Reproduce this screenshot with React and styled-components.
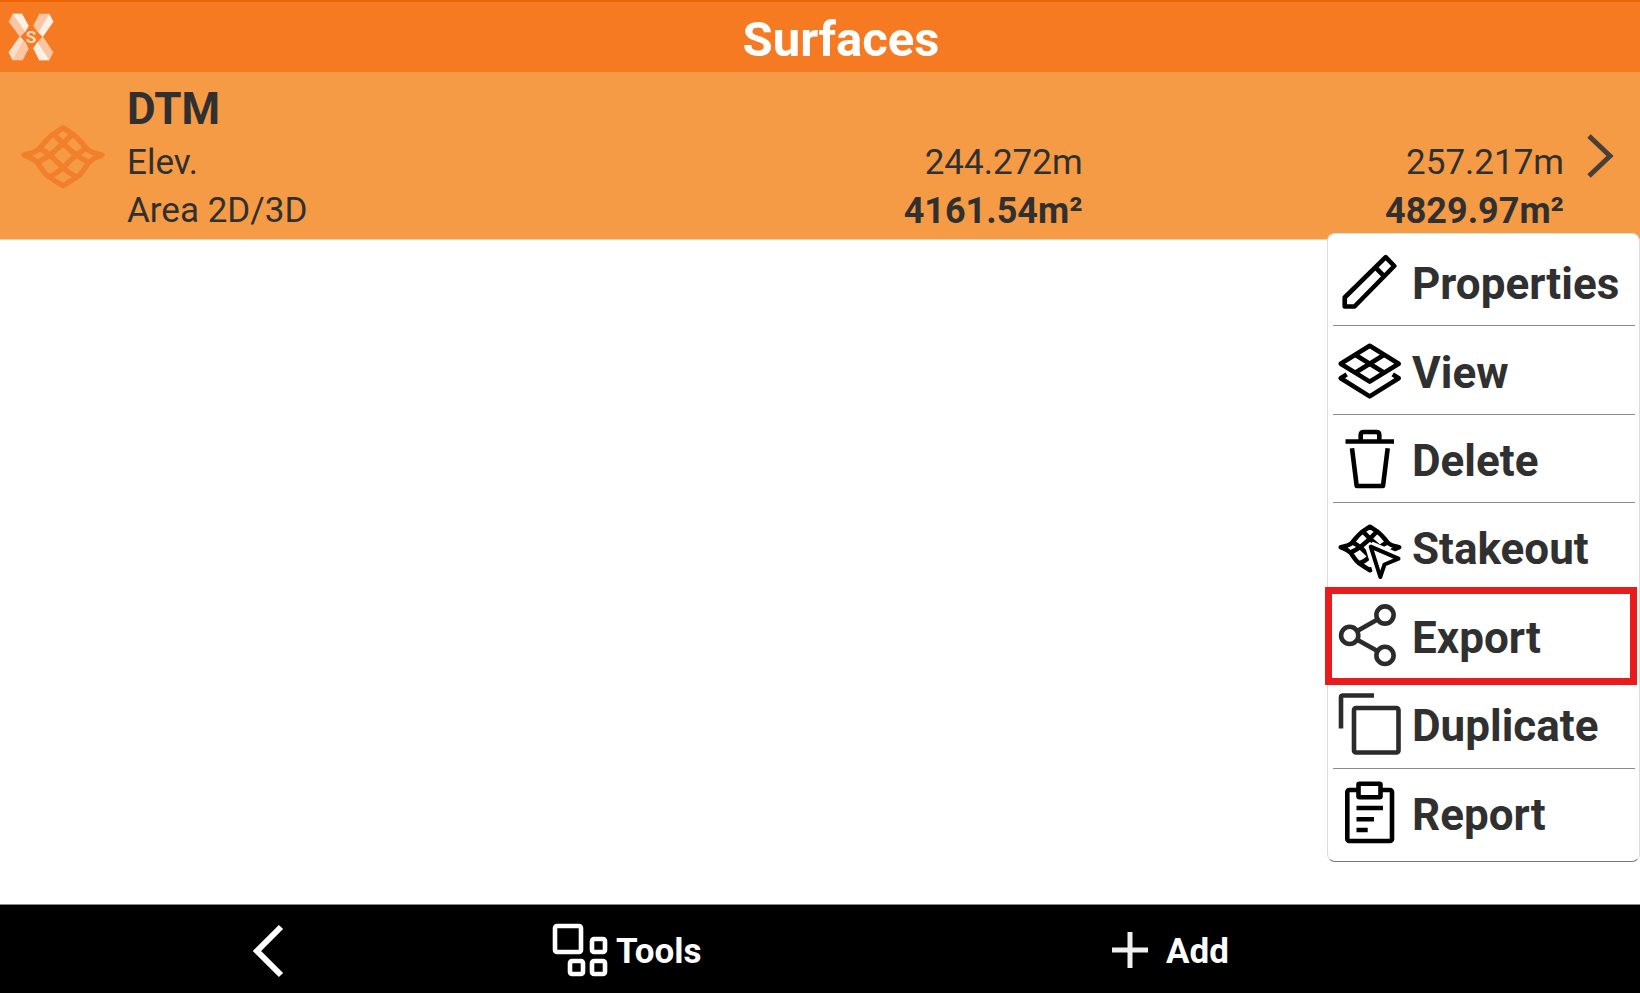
import React from "react";
import styled, { createGlobalStyle, css } from "styled-components";

const GlobalStyle = createGlobalStyle`
  *, *::before, *::after { box-sizing: border-box; }
  body {
    margin: 0;
    background: #fff;
    color: #303030;
    font-family: Roboto, "Liberation Sans", sans-serif;
  }
`;

const Page = styled.div`
  display: flex;
  flex-direction: column;
  min-height: 100vh;
`;

const Header = styled.header`
  display: flex;
  align-items: center;
  height: 72px;
  padding: 0 12px 0 8px;
  background: #f67a21;
  border-top: 2px solid #ec6608;
`;

const Title = styled.h1`
  flex: 1;
  margin: 0;
  padding-top: 6px;
  color: #fff;
  font-size: 49px;
  line-height: 56px;
  font-weight: 700;
  text-align: center;
`;

const Main = styled.main`
  position: relative;
  flex: 1;
  min-height: 792px;
`;

const SurfaceRow = styled.section`
  display: flex;
  align-items: center;
  padding: 0 24px 0 22px;
  background: #f59b45;
  border-bottom: 1px solid #f3cfa9;
`;

const SurfaceBody = styled.div`
  flex: 1;
  padding: 12px 22px 4px 23px;
`;

const SurfaceName = styled.h2`
  margin: 0 0 5px;
  font-size: 44px;
  line-height: 50px;
  font-weight: 700;
`;

const Values = styled.table`
  width: 100%;
  table-layout: fixed;
  border-collapse: collapse;
  font-size: 35px;
  line-height: 48px;
`;

const Label = styled.th`
  width: 33%;
  padding: 0;
  font-weight: 400;
  text-align: left;
`;

const Value = styled.td`
  padding: 0;
  font-size: ${(p) => (p.$strong ? "36px" : "35px")};
  font-weight: ${(p) => (p.$strong ? 700 : 400)};
  text-align: right;
`;

const PlainButton = styled.button`
  display: flex;
  align-items: center;
  padding: 0;
  border: 0;
  background: none;
  color: inherit;
  font-family: inherit;
  text-align: left;
  cursor: pointer;
`;

const Menu = styled.ul`
  position: absolute;
  top: 161px;
  right: 0;
  display: grid;
  grid-template-rows: repeat(7, 1fr);
  width: 313px;
  height: 629px;
  margin: 0;
  padding: 4px 4px 4px 5px;
  list-style: none;
  background: #fff;
  border: 1px solid #dcdcdc;
  border-bottom-color: #777;
  border-radius: 8px;
`;

const MenuItem = styled.li`
  position: relative;
  display: flex;
  border-bottom: 1px solid #8c8c8c;
  &:last-child { border-bottom-color: transparent; }
  ${(p) =>
    p.$highlighted &&
    css`
      &::after {
        content: "";
        position: absolute;
        inset: -5px -2px -6px -8px;
        border: 7px solid #e81c1c;
        pointer-events: none;
      }
    `}
`;

const MenuButton = styled(PlainButton)`
  flex: 1;
  gap: 10px;
  padding-left: 5px;
  font-size: 44px;
  line-height: 52px;
  font-weight: 700;
`;

const MenuLabel = styled.span`
  padding-top: 5px;
`;

const Toolbar = styled.footer`
  display: grid;
  grid-template-columns: 548fr 550fr 542fr;
  height: 89px;
  padding-top: 4px;
  background: #000;
  border-top: 1px solid #888;
  color: #fff;
`;

const ToolButton = styled(PlainButton)`
  gap: 4px;
  padding-right: ${(p) => (p.$centered ? "12px" : "0")};
  justify-content: ${(p) => (p.$centered ? "center" : "flex-start")};
  font-size: 35px;
  line-height: 44px;
  font-weight: 700;
`;

const ToolLabel = styled.span`
  padding-top: 2px;
`;

const Svg = styled.svg`
  flex: none;
  display: block;
  overflow: visible;
`;

function Icon({ color = "#000", width = 4.6, children }) {
  return (
    <Svg width="64" height="64" viewBox="0 0 64 64" fill="none" stroke={color}
      strokeWidth={width} strokeLinejoin="round" aria-hidden="true">
      {children}
    </Svg>
  );
}

function Mesh() {
  return (
    <>
      <path d="M24 110C38 107 58 104 70 91C84 76 90 64 108 50Q126 38 141 28Q156 38 174 50C192 64 198 76 212 91C224 104 244 107 258 110C242 116 228 121 218 133C206 148 200 164 184 175Q162 190 141 202Q120 190 98 175C82 164 76 148 64 133C54 121 40 116 24 110Z" />
      <path d="M112 47Q126 60 141 76L180 110Q204 126 220 132" />
      <path d="M170 47Q156 60 141 76L102 110Q78 126 62 132" />
      <path d="M70 91Q84 96 102 110L141 148Q164 168 184 175" />
      <path d="M212 91Q198 96 180 110L141 148Q118 168 98 175" />
    </>
  );
}

function Logo() {
  return (
    <Svg width="46" height="48" viewBox="24 38 138 144" aria-hidden="true">
      <path fill="#fbc6a3" d="M38 40L66 40L86 76L76 94L60 110L26 64Z" />
      <path fill="#fff0e6" d="M38 40L66 40L86 76L76 94Z" />
      <path fill="#fbc6a3" d="M118 40L148 40L160 64L128 110L112 94L100 76Z" />
      <path fill="#fff0e6" d="M148 40L160 64L128 110L116 96Z" />
      <path fill="#fbc6a3" d="M60 108L78 128L86 145L68 180L38 180L26 156Z" />
      <path fill="#fde0cc" d="M60 108L26 156L38 180L70 120Z" />
      <path fill="#fbc6a3" d="M128 108L160 156L148 180L118 180L100 144L110 128Z" />
      <path fill="#fff0e6" d="M112 126L148 180L118 180L100 144Z" />
      <circle cx="93" cy="109" r="20" fill="#f67a21" />
      <text x="93" y="128" fill="#fdd9c0" fontSize="52" fontWeight="700" textAnchor="middle">S</text>
    </Svg>
  );
}

const icons = {
  properties: (
    <Icon>
      <path d="M6.700 56.500V47.500L47.700 7.200L56.300 16L16.500 56.500ZM37.500 17.500L46.300 26.300" />
    </Icon>
  ),
  view: (
    <Icon>
      <path d="M31.700 7.800L60.700 25.800L31.700 43.600L2.700 25.800ZM17.200 16.800L46.200 34.700M46.200 16.800L17.200 34.700" />
      <path d="M8.700 36.400L2.700 40.200L31.700 58.400L60.700 40.200L54.700 36.400" />
    </Icon>
  ),
  delete: (
    <Icon>
      <path d="M7.500 14.500H56M22.700 14.500V8Q22.700 5 25.700 5H38.300Q41.300 5 41.300 8V14.500" />
      <path d="M14 21.200L18.700 59H45L49.700 21.200" />
    </Icon>
  ),
  stakeout: (
    <Icon>
      <g transform="translate(-3.300 4.700) scale(.25)" strokeWidth="18">
        <Mesh />
      </g>
      <path d="M32.700 31.700L61 44L46.500 49.500L42.300 63Z" stroke="#fff" strokeWidth="11" fill="#fff" strokeLinejoin="miter" strokeMiterlimit="2" />
      <path d="M32.700 31.700L60.500 43.700L46.500 49.500L42.300 62Z" strokeWidth="4" />
    </Icon>
  ),
  export: (
    <Icon color="#2b2b2b">
      <circle cx="11.700" cy="32.400" r="8.600" />
      <circle cx="47" cy="12" r="8.600" />
      <circle cx="47" cy="52.400" r="8.600" />
      <path d="M19.200 28L39.500 16.400M19.200 36.800L39.500 48" />
    </Icon>
  ),
  duplicate: (
    <Icon color="#2b2b2b">
      <rect x="16" y="16" width="44.500" height="44.500" rx="2" />
      <path d="M36 3.500H5Q3 3.500 3 5.500V36.500" />
    </Icon>
  ),
  report: (
    <Icon>
      <rect x="9.300" y="10" width="44.700" height="51" rx="2" />
      <rect x="20.500" y="3.800" width="22" height="13.400" rx="1" fill="#fff" />
      <path d="M18.500 28H45M18.500 39.200H36M18.500 50H29.700" />
    </Icon>
  ),
};

const menuItems = [
  ["properties", "Properties"],
  ["view", "View"],
  ["delete", "Delete"],
  ["stakeout", "Stakeout"],
  ["export", "Export"],
  ["duplicate", "Duplicate"],
  ["report", "Report"],
];

export default function App() {
  return (
    <Page>
      <GlobalStyle />
      <Header>
        <Logo />
        <Title>Surfaces</Title>
      </Header>
      <Main>
        <SurfaceRow>
          <Svg width="82" height="62" viewBox="18 20 246 186" fill="none" stroke="#f27f2b"
            strokeWidth="16" strokeLinejoin="round" aria-hidden="true">
            <Mesh />
          </Svg>
          <SurfaceBody>
            <SurfaceName>DTM</SurfaceName>
            <Values>
              <tbody>
                <tr>
                  <Label scope="row">Elev.</Label>
                  <Value>244.272m</Value>
                  <Value>257.217m</Value>
                </tr>
                <tr>
                  <Label scope="row">Area 2D/3D</Label>
                  <Value $strong>4161.54m²</Value>
                  <Value $strong>4829.97m²</Value>
                </tr>
              </tbody>
            </Values>
          </SurfaceBody>
          <PlainButton aria-label="Open DTM">
            <Svg width="30" height="46" viewBox="0 0 30 46" fill="none" stroke="#4a3f36" strokeWidth="5" aria-hidden="true">
              <path d="M3 3L24 23L3 43" />
            </Svg>
          </PlainButton>
        </SurfaceRow>
        <Menu>
          {menuItems.map(([key, label]) => (
            <MenuItem key={key} $highlighted={key === "export"}>
              <MenuButton>
                {icons[key]}
                <MenuLabel>{label}</MenuLabel>
              </MenuButton>
            </MenuItem>
          ))}
        </Menu>
      </Main>
      <Toolbar>
        <ToolButton $centered aria-label="Back">
          <Icon color="#fff" width={6}>
            <path d="M45 8L21 32L45 56" strokeLinejoin="miter" />
          </Icon>
        </ToolButton>
        <ToolButton>
          <Icon color="#fff">
            <rect x="7" y="7" width="26" height="26" rx="2" />
            <rect x="44" y="20" width="13" height="13" rx="2" />
            <rect x="22" y="42" width="13" height="13" rx="2" />
            <rect x="44" y="42" width="13" height="13" rx="2" />
          </Icon>
          <ToolLabel>Tools</ToolLabel>
        </ToolButton>
        <ToolButton>
          <Icon color="#f0f0f0" width={5}>
            <path d="M14 31H50M32 13V49" />
          </Icon>
          <ToolLabel>Add</ToolLabel>
        </ToolButton>
      </Toolbar>
    </Page>
  );
}
